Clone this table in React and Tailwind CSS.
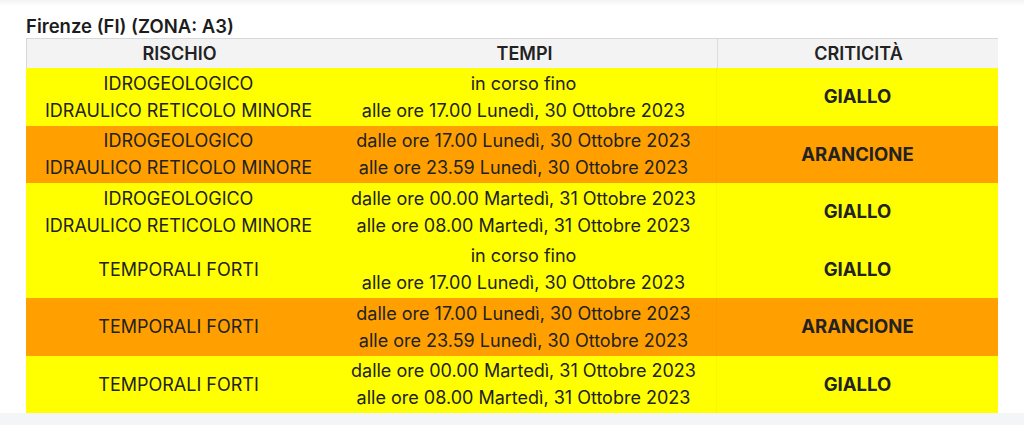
const rows = [
  { risk: ['IDROGEOLOGICO', 'IDRAULICO RETICOLO MINORE'], time: ['in corso fino', 'alle ore 17.00 Lunedì, 30 Ottobre 2023'], level: 'GIALLO' },
  { risk: ['IDROGEOLOGICO', 'IDRAULICO RETICOLO MINORE'], time: ['dalle ore 17.00 Lunedì, 30 Ottobre 2023', 'alle ore 23.59 Lunedì, 30 Ottobre 2023'], level: 'ARANCIONE' },
  { risk: ['IDROGEOLOGICO', 'IDRAULICO RETICOLO MINORE'], time: ['dalle ore 00.00 Martedì, 31 Ottobre 2023', 'alle ore 08.00 Martedì, 31 Ottobre 2023'], level: 'GIALLO' },
  { risk: ['TEMPORALI FORTI'], time: ['in corso fino', 'alle ore 17.00 Lunedì, 30 Ottobre 2023'], level: 'GIALLO' },
  { risk: ['TEMPORALI FORTI'], time: ['dalle ore 17.00 Lunedì, 30 Ottobre 2023', 'alle ore 23.59 Lunedì, 30 Ottobre 2023'], level: 'ARANCIONE' },
  { risk: ['TEMPORALI FORTI'], time: ['dalle ore 00.00 Martedì, 31 Ottobre 2023', 'alle ore 08.00 Martedì, 31 Ottobre 2023'], level: 'GIALLO' },
];

export default function App() {
  return (
    <div
      className="h-[425px] w-[1024px] overflow-hidden bg-white text-[#222]"
      style={{ fontFamily: 'Inter, Roboto, sans-serif' }}
    >
      <div className="h-[6px] bg-gradient-to-b from-[#f3f3f3] to-white" />
      <div className="px-[26px] pt-[8px]">
        <h2 className="text-[18.5px] font-semibold leading-[24px] text-[#1c1c1c]">Firenze (FI) (ZONA: A3)</h2>
        <div className="w-[972px]">
          <div className="grid h-[30px] grid-cols-[305px_385px_282px] border-t border-l border-[#d8d8d8] bg-[#f3f3f3] text-[18px] font-semibold leading-[29px]">
            <div className="text-center">RISCHIO</div>
            <div className="text-center">TEMPI</div>
            <div className="border-l border-[#dcdcdc] text-center">CRITICITÀ</div>
          </div>
          {rows.map((r, i) => (
            <div
              key={i}
              className={[
                'grid h-[57.5px] grid-cols-[305px_385px_282px] text-[18px] leading-[27px]',
                r.level === 'GIALLO' ? 'bg-[#ffff00]' : 'bg-[#ffa000]',
              ].join(' ')}
            >
              <div className="flex flex-col items-center justify-center">
                {r.risk.map((t) => (
                  <div key={t}>{t}</div>
                ))}
              </div>
              <div className="flex flex-col items-center justify-center">
                {r.time.map((t) => (
                  <div key={t}>{t}</div>
                ))}
              </div>
              <div className="flex items-center justify-center border-l border-black/[0.03] text-[18.5px] font-bold">
                {r.level}
              </div>
            </div>
          ))}
        </div>
      </div>
      <div className="h-[20px] bg-[#f4f5f7]" />
    </div>
  );
}
